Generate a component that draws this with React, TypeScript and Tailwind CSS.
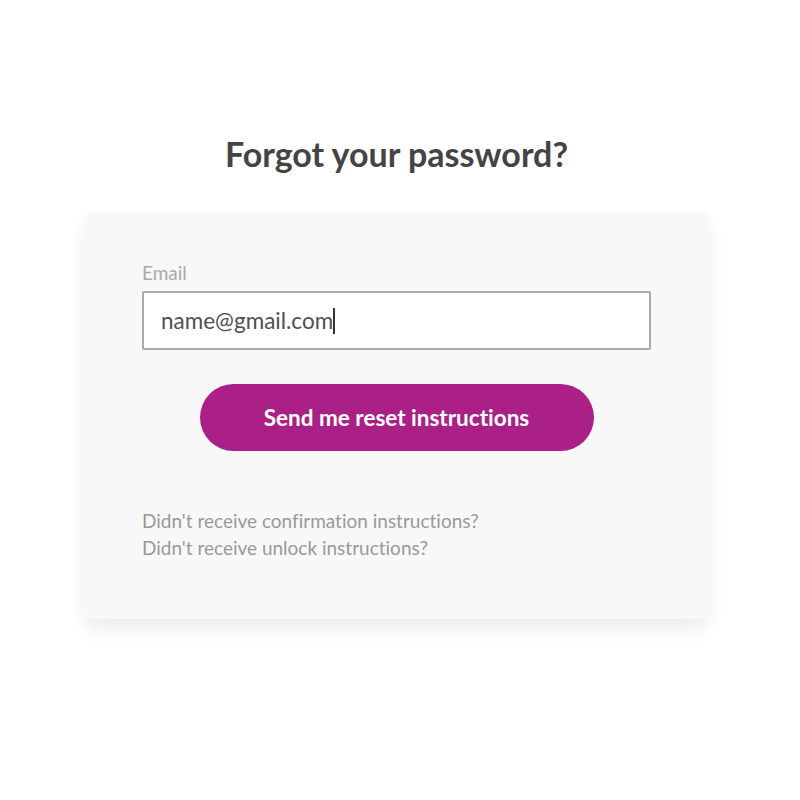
export default function App() {
  return (
    <div className="min-h-[800px] w-full bg-white font-['Lato','Liberation_Sans',sans-serif] [font-variant-ligatures:none]">
      <div className="flex flex-col items-center pt-[134px] pr-[7px]">
        <h1 className="text-[34px] font-bold leading-[40px] text-[#444]">Forgot your password?</h1>
        <div className="mt-[38px] w-[623px] rounded-md bg-[#f8f8f8] px-[57px] pt-[50px] pb-[58px] shadow-[0_10px_18px_rgba(0,0,0,0.07)]">
          <label className="block text-[19px] leading-[22px] text-[#aaa]">Email</label>
          <div className="mt-[7px] flex h-[59px] items-center rounded-[2px] border-2 border-[#aaa] bg-white px-[17px]">
            <span className="text-[22.5px] text-[#4c5157]">name@gmail.com</span>
            <span className="h-[26px] w-[2px] bg-[#333]" />
          </div>
          <div className="mt-[34px] flex justify-center">
            <button className="h-[67px] w-[394px] rounded-full bg-[#ab2087] text-[22.5px] font-bold text-white">
              Send me reset instructions
            </button>
          </div>
          <div className="mt-[56px] flex flex-col text-[19px] leading-[27px] text-[#999]">
            <a>Didn't receive confirmation instructions?</a>
            <a>Didn't receive unlock instructions?</a>
          </div>
        </div>
      </div>
    </div>
  );
}
